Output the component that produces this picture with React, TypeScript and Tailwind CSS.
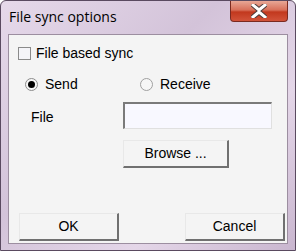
export default function App() {
  return (
    <div className="w-[296px] h-[251px] bg-[linear-gradient(135deg,#e6d9ea_0%,#d3c3d9_40%,#e4d6e8_70%,#c9b6cf_100%)] rounded-t-[6px] border border-[#5a4a60] flex flex-col" style={{ fontFamily: '"Liberation Sans", Arial, sans-serif' }}>
      <div className="h-[33px] flex items-start">
        <div className="pl-[8px] pt-[5px] text-[14px] text-black" style={{ fontFamily: '"Open Sans", "Noto Sans", sans-serif' }}>File sync options</div>
        <div className="ml-auto mr-[7px] w-[58px] h-[21px] rounded-b-[4px] border border-[#7a2a20] border-t-0 bg-[linear-gradient(#e8a796_0%,#d8705a_45%,#c2381e_55%,#d2533a_100%)] flex items-center justify-center">
          <svg width="16" height="14" viewBox="0 0 16 14">
            <path d="M2 1 L8 6 L14 1 M2 13 L8 8 L14 13" stroke="#4a3a3a" strokeWidth="5" fill="none" strokeLinecap="square" />
            <path d="M2 1 L8 6 L14 1 M2 13 L8 8 L14 13" stroke="#ffffff" strokeWidth="3" fill="none" strokeLinecap="square" />
          </svg>
        </div>
      </div>
      <div className="mx-[7px] h-[210px] bg-[#f4f4f4] border border-[#9c8ea0] flex flex-col text-[14px] text-black">
        <label className="flex items-center gap-[5px] pl-[9px] mt-[9px] h-[18px]">
          <span className="w-[13px] h-[13px] border border-[#8a8a8a] bg-[#f4f4f8]" />
          <span>File based sync</span>
        </label>
        <div className="flex items-center mt-[13px] h-[18px] pl-[16px]">
          <div className="flex items-center gap-[7px] w-[115px]">
            <span className="w-[13px] h-[13px] rounded-full border border-[#8c8c8c] bg-[#f6f6f6] flex items-center justify-center">
              <span className="w-[7px] h-[7px] rounded-full bg-black" />
            </span>
            <span>Send</span>
          </div>
          <div className="flex items-center gap-[7px]">
            <span className="w-[13px] h-[13px] rounded-full border border-[#a0a0a0] bg-[#f6f6f6]" />
            <span>Receive</span>
          </div>
        </div>
        <div className="flex items-center mt-[9px] pl-[22px]">
          <span className="w-[92px] pt-[3px]">File</span>
          <div className="w-[149px] h-[27px] border-t-2 border-l-2 border-[#7a7a7a] border-b border-r border-b-[#e0e0e0] border-r-[#e0e0e0] bg-[#f8f8ff]" />
        </div>
        <div className="pl-[114px] mt-[11px]">
          <button className="w-[106px] h-[28px] bg-[#f4f4f4] border border-[#e8e8e8] border-b-2 border-r-2 border-b-[#707070] border-r-[#707070] text-[14px]">Browse ...</button>
        </div>
        <div className="mt-auto mb-[2px] flex justify-between pl-[10px] pr-[2px]">
          <button className="w-[100px] h-[28px] bg-[#f4f4f4] border border-[#e8e8e8] border-b-2 border-r-2 border-b-[#707070] border-r-[#707070] text-[14px]">OK</button>
          <button className="w-[100px] h-[28px] bg-[#f4f4f4] border border-[#e8e8e8] border-b-2 border-r-2 border-b-[#707070] border-r-[#707070] text-[14px]">Cancel</button>
        </div>
      </div>
    </div>
  );
}
